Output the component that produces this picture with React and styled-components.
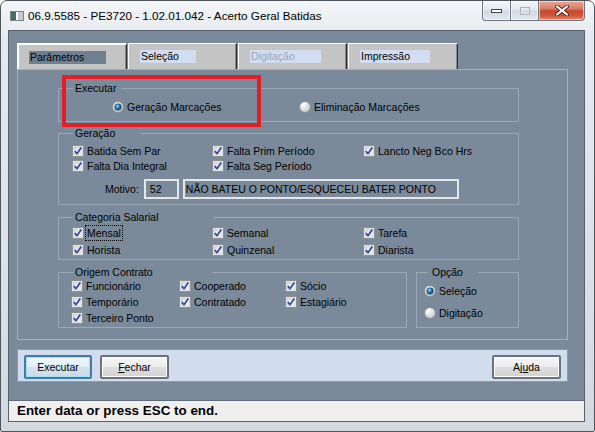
import React from 'react';
import styled, { createGlobalStyle } from 'styled-components';

const GlobalStyle = createGlobalStyle`
  html, body { margin: 0; padding: 0; background: #ffffff; }
  body { font-family: "Liberation Sans", Arial, sans-serif; }
  * { box-sizing: border-box; }
`;

const FONT = `"Liberation Sans", Arial, sans-serif`;

// window chrome

const Window = styled.div`
  position: relative;
  width: 595px;
  height: 432px;
  display: flex;
  flex-direction: column;
  padding: 0 9px 9px 7px;
  border: 1px solid #4f555d;
  border-radius: 7px 7px 2px 2px;
  background: linear-gradient(180deg, #f4f6f8 0%, #e6eaee 8%, #dce1e6 60%, #d3d9df 100%);
`;

const TitleBar = styled.div`
  height: 29px;
  flex: none;
  display: flex;
  align-items: center;
  margin: 0 -7px 0 -7px;
  padding: 0 7px 0 9px;
`;

const AppIcon = styled.svg`
  flex: none;
  margin-right: 4px;
`;

const Title = styled.span`
  font-family: ${FONT};
  font-size: 11.7px;
  color: #000;
  white-space: nowrap;
`;

const WinButtons = styled.div`
  display: flex;
  align-self: flex-start;
  margin-left: auto;
`;

const CapButton = styled.div`
  width: ${p => p.$w}px;
  height: 20px;
  display: flex;
  align-items: center;
  justify-content: center;
  border: 1px solid #6e7682;
  border-top: none;
  border-left: ${p => (p.$first ? '1px solid #6e7682' : 'none')};
  border-radius: ${p => p.$radius};
  background: ${p =>
    p.$close
      ? 'linear-gradient(180deg, #e9a899 0%, #dc7c66 40%, #c8472c 52%, #d0563a 78%, #e58a6c 100%)'
      : 'linear-gradient(180deg, #f4f6f9 0%, #e4e8ee 45%, #d3d9e1 52%, #e3e8ee 100%)'};
  box-shadow: inset 0 0 0 1px rgba(255, 255, 255, 0.55);
`;

// client area

const Client = styled.div`
  flex: 1;
  display: flex;
  flex-direction: column;
  background: #7b8a9a;
  border: 1px solid #56616d;
`;

const Content = styled.div`
  flex: 1;
  display: flex;
  flex-direction: column;
  padding: 12px 16px 0 8px;
`;

const TabStrip = styled.div`
  display: flex;
  gap: 1px;
  height: 26px;
`;

const Tab = styled.div`
  width: ${p => p.$w}px;
  height: 26px;
  padding: 6px 0 0 ${p => (p.$active ? 10 : 11)}px;
  background: #c4c4c4;
  border-top: ${p => (p.$active ? 2 : 1)}px solid #ffffff;
  border-left: ${p => (p.$active ? 2 : 1)}px solid #ffffff;
  border-right: 1px solid #2f2f2f;
  box-shadow: inset -1px 0 0 #8a8a8a;
`;

const TabLabel = styled.span`
  display: block;
  width: ${p => p.$w}px;
  height: 13px;
  padding-left: 1px;
  font-family: ${FONT};
  font-size: 10.5px;
  line-height: 13px;
  color: ${p => (p.$disabled ? '#9ea6ae' : '#000')};
  background: ${p => (p.$active ? '#6f7f8f' : '#d2ddf1')};
`;

const Panel = styled.div`
  height: 271px;
  display: flex;
  flex-direction: column;
  align-items: flex-start;
  padding: 11px 0 0 40px;
  border: 1px solid #a4b0bc;
`;

const Group = styled.fieldset`
  margin: ${p => p.$mt || 0}px 0 0 0;
  padding: 0;
  min-width: 0;
  width: ${p => p.$w || 461}px;
  height: ${p => p.$h}px;
  border: 1px solid #9ba8b5;
`;

const Legend = styled.legend`
  margin-left: ${p => p.$ml ?? 14}px;
  padding: 0 0 0 ${p => p.$pad ?? 2}px;
  width: ${p => p.$w}px;
  font-family: ${FONT};
  font-size: 10.5px;
  line-height: 14px;
  color: #000;
`;

const Grid = styled.div`
  display: grid;
  grid-template-columns: ${p => p.$cols};
  grid-auto-rows: ${p => p.$row}px;
  padding: ${p => p.$pad};
  margin-top: ${p => p.$mt || 0}px;
`;

const Item = styled.div`
  display: flex;
  align-items: center;
  gap: 3px;
  font-family: ${FONT};
  font-size: 10.5px;
  color: #000;
  white-space: nowrap;
`;

const Focus = styled.span`
  outline: 1px dotted #000;
  outline-offset: 1px;
`;

const MotivoRow = styled.div`
  display: flex;
  align-items: center;
  height: 20px;
  margin-top: 6px;
  padding-left: 46px;
  font-family: ${FONT};
  font-size: 10.5px;
  color: #000;
`;

const MotivoLabel = styled.span`
  margin-right: 5px;
`;

const Field = styled.div`
  width: ${p => p.$w}px;
  height: 20px;
  margin-right: 4px;
  padding-left: ${p => p.$pl}px;
  border: 2px solid #e4e6e8;
  line-height: 16px;
  white-space: nowrap;
  overflow: hidden;
`;

const Row = styled.div`
  display: flex;
  gap: 9px;
  margin-top: 5px;
`;

const ButtonBar = styled.div`
  height: 33px;
  margin-top: 9px;
  display: flex;
  align-items: flex-start;
  gap: 8px;
  padding: 5px 6px 0 6px;
  background: #d1dcec;
  border: 1px solid #8d9aa8;
`;

const Button = styled.div`
  width: ${p => p.$w}px;
  height: 24px;
  display: flex;
  align-items: center;
  justify-content: center;
  margin-left: ${p => (p.$push ? 'auto' : 0)};
  font-family: ${FONT};
  font-size: 10.5px;
  color: #000;
  border: 2px solid ${p => (p.$default ? '#3f7ca6' : '#6a737c')};
  border-radius: 2px;
  background: ${p =>
    p.$default
      ? 'linear-gradient(180deg, #f1f7fb 0%, #e3eef6 48%, #d3e3ee 52%, #c9dbe8 100%)'
      : 'linear-gradient(180deg, #f6f6f6 0%, #ececec 48%, #dedede 52%, #d2d2d2 100%)'};
  box-shadow: inset 0 0 0 1px ${p => (p.$default ? '#a7dcf6' : '#fbfbfb')};
`;

const StatusBar = styled.div`
  height: 21px;
  flex: none;
  padding-left: 8px;
  border-top: 1px solid #5f6b78;
  background: #f0efee;
  font-family: ${FONT};
  font-weight: bold;
  font-size: 13.4px;
  line-height: 19px;
  color: #000;
`;

const Highlight = styled.div`
  position: absolute;
  left: 61px;
  top: 74px;
  width: 199px;
  height: 52px;
  border: 4px solid #e31e26;
  pointer-events: none;
`;

// little drawings

const CheckBox = () => (
  <svg width="12" height="12" viewBox="0 0 12 12" style={{ flex: 'none' }}>
    <defs>
      <linearGradient id="cbIn" x1="0" y1="0" x2="1" y2="1">
        <stop offset="0" stopColor="#d6d9de" />
        <stop offset="1" stopColor="#fbfbfb" />
      </linearGradient>
    </defs>
    <rect x="0.5" y="0.5" width="11" height="11" fill="#f6f6f6" stroke="#8e8f91" />
    <rect x="2" y="2" width="8" height="8" fill="url(#cbIn)" stroke="#b9bcc1" strokeWidth="0.7" />
    <path d="M2.8 6.1 L5 8.7 L9.3 2.6" fill="none" stroke="#34469a" strokeWidth="1.7" strokeLinejoin="round" />
  </svg>
);

const Radio = ({ on }) => (
  <svg width="12" height="12" viewBox="0 0 12 12" style={{ flex: 'none' }}>
    <defs>
      <radialGradient id="rdOff" cx="0.35" cy="0.3" r="0.8">
        <stop offset="0" stopColor="#ffffff" />
        <stop offset="1" stopColor="#bfc2c5" />
      </radialGradient>
      <radialGradient id="rdOn" cx="0.4" cy="0.35" r="0.7">
        <stop offset="0" stopColor="#9fdcf7" />
        <stop offset="0.45" stopColor="#2385bd" />
        <stop offset="1" stopColor="#0c3d63" />
      </radialGradient>
    </defs>
    <circle cx="6" cy="6" r="5.5" fill="url(#rdOff)" stroke="#8b8d90" />
    {on && <circle cx="6" cy="6" r="3.3" fill="url(#rdOn)" stroke="#103b5c" strokeWidth="0.6" />}
  </svg>
);

const Check = ({ children }) => (
  <Item>
    <CheckBox />
    {children}
  </Item>
);

const Option = ({ on, children }) => (
  <Item>
    <Radio on={on} />
    {children}
  </Item>
);

const App = () => {
  return (
    <>
      <GlobalStyle />
      <Window>
        <TitleBar>
          <AppIcon width="14" height="10" viewBox="0 0 14 10">
            <rect x="0.5" y="0.5" width="13" height="9" fill="#d9dcdf" stroke="#7d8287" />
            <rect x="1" y="1" width="5" height="8" fill="#4d6b5c" />
            <rect x="6" y="1" width="2" height="8" fill="#ffffff" />
            <rect x="8" y="1" width="5" height="8" fill="#c3c8cd" />
          </AppIcon>
          <Title>06.9.5585 - PE3720 - 1.02.01.042 - Acerto Geral Batidas</Title>
          <WinButtons>
            <CapButton $w={29} $first $radius="0 0 0 4px">
              <svg width="11" height="4" viewBox="0 0 11 4">
                <rect x="0.5" y="0.5" width="10" height="3" fill="#ffffff" stroke="#3e4652" />
              </svg>
            </CapButton>
            <CapButton $w={28} $radius="0">
              <svg width="10" height="8" viewBox="0 0 10 8">
                <rect x="0.5" y="0.5" width="9" height="7" fill="none" stroke="#a9b0b8" />
                <rect x="1.5" y="1.5" width="7" height="5" fill="none" stroke="#e6e9ec" />
              </svg>
            </CapButton>
            <CapButton $w={46} $close $radius="0 0 4px 0">
              <svg width="14" height="11" viewBox="0 0 14 11">
                <path d="M2 1.5 L12 9.5 M12 1.5 L2 9.5" stroke="#5a2319" strokeWidth="4" strokeLinecap="round" />
                <path d="M2 1.5 L12 9.5 M12 1.5 L2 9.5" stroke="#ffffff" strokeWidth="2.2" strokeLinecap="round" />
              </svg>
            </CapButton>
          </WinButtons>
        </TitleBar>

        <Client>
          <Content>
            <TabStrip>
              <Tab $w={110} $active>
                <TabLabel $w={77} $active>Parâmetros</TabLabel>
              </Tab>
              <Tab $w={109}>
                <TabLabel $w={56}>Seleção</TabLabel>
              </Tab>
              <Tab $w={109}>
                <TabLabel $w={71} $disabled>Digitação</TabLabel>
              </Tab>
              <Tab $w={110}>
                <TabLabel $w={70}>Impressão</TabLabel>
              </Tab>
            </TabStrip>

            <Panel>
              <Group $h={41}>
                <Legend $w={48}>Executar</Legend>
                <Grid $cols="187px 1fr" $row={14} $pad="5px 0 0 53px">
                  <Option on>Geração Marcações</Option>
                  <Option>Eliminação Marcações</Option>
                </Grid>
              </Group>

              <Group $h={79} $mt={4}>
                <Legend $w={68}>Geração</Legend>
                <Grid $cols="140px 151px 1fr" $row={15} $pad="3px 0 0 13px">
                  <Check>Batida Sem Par</Check>
                  <Check>Falta Prim Período</Check>
                  <Check>Lancto Neg Bco Hrs</Check>
                  <Check>Falta Dia Integral</Check>
                  <Check>Falta Seg Período</Check>
                </Grid>
                <MotivoRow>
                  <MotivoLabel>Motivo:</MotivoLabel>
                  <Field $w={35} $pl={4}>52</Field>
                  <Field $w={276} $pl={1}>NÃO BATEU O PONTO/ESQUECEU BATER PONTO</Field>
                </MotivoRow>
              </Group>

              <Group $h={50} $mt={5}>
                <Legend $w={140}>Categoria Salarial</Legend>
                <Grid $cols="140px 151px 1fr" $row={17} $pad="0 0 0 13px">
                  <Check><Focus>Mensal</Focus></Check>
                  <Check>Semanal</Check>
                  <Check>Tarefa</Check>
                  <Check>Horista</Check>
                  <Check>Quinzenal</Check>
                  <Check>Diarista</Check>
                </Grid>
              </Group>

              <Row>
                <Group $w={349} $h={63}>
                  <Legend $w={140}>Origem Contrato</Legend>
                  <Grid $cols="108px 106px 1fr" $row={16} $pad="0 0 0 12px" $mt={-1}>
                    <Check>Funcionário</Check>
                    <Check>Cooperado</Check>
                    <Check>Sócio</Check>
                    <Check>Temporário</Check>
                    <Check>Contratado</Check>
                    <Check>Estagiário</Check>
                    <Check>Terceiro Ponto</Check>
                  </Grid>
                </Group>
                <Group $w={103} $h={63}>
                  <Legend $w={51} $ml={10} $pad={5}>Opção</Legend>
                  <Grid $cols="1fr" $row={22} $pad="1px 0 0 7px">
                    <Option on>Seleção</Option>
                    <Option>Digitação</Option>
                  </Grid>
                </Group>
              </Row>
            </Panel>

            <ButtonBar>
              <Button $w={68} $default>Executar</Button>
              <Button $w={69}><u>F</u>echar</Button>
              <Button $w={69} $push>Aj<u>u</u>da</Button>
            </ButtonBar>
          </Content>
          <StatusBar>Enter data or press ESC to end.</StatusBar>
        </Client>

        <Highlight />
      </Window>
    </>
  );
};

export default App;
